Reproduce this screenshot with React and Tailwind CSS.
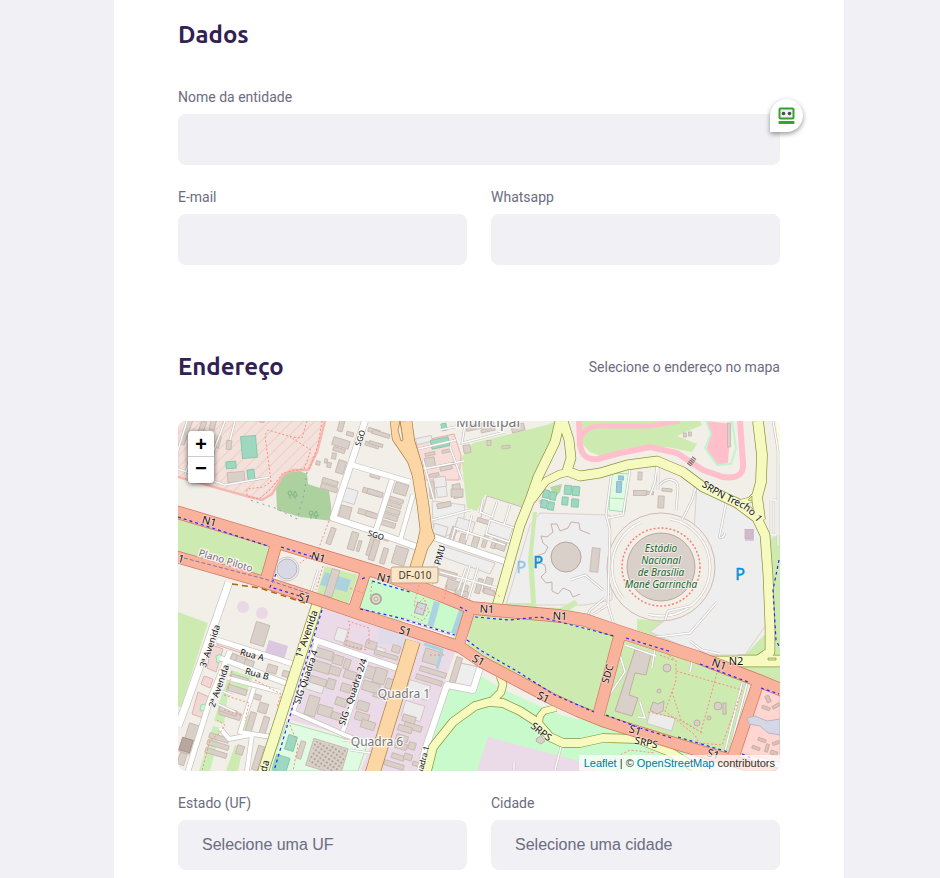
import React from "react";

const AREAS = [
  // residential and plain blocks
  { f: "#f3e2dc", s: "#f8c4bd", d: "M178 421H325L317 452L308 470L293 470L283 475L272 494L262 500L250 497L178 477Z" },
  { f: "#cdebb0", d: "M178 518L270 547L261 578L178 552Z" },
  { f: "#cdebb0", d: "M178 612L208 623L181 707H178Z" },
  { f: "#cdebb0", d: "M461 458L473 443L547 425L556 421L553 437L524 508L485 495L477 511L467 508Z" },
  { f: "#cdebb0", d: "M577 421H700L702 425L677 436L697 444L692 452L667 447L627 448L603 457L590 452L579 440Z" },
  { f: "#cdebb0", d: "M472 613L580 622L616 637L594 712L570 705L467 647Z" },
  { f: "#cdebb0", d: "M625 638L750 680L730 755L603 718Z" },
  { f: "#cdebb0", d: "M771 538L780 534V690L700 658L745 655L771 628Z" },
  { f: "#cdebb0", d: "M637 619L680 623L690 650L637 630Z" },
  { f: "#c8facc", d: "M366 577L467 610L458 642L400 624L356 608Z" },
  { f: "#c8facc", d: "M480 675L500 688L560 715L620 728L690 755V771H425L445 690Z" },
  { f: "#ebdbe8", d: "M488 737L575 760L600 771H477Z" },
  { f: "#ebdbe8", d: "M322 608L430 640L455 652L442 690L416 771H360L372 743L290 720Z" },
  { f: "#dffce2", s: "#b4dcb4", d: "M287 722L367 745L358 771H268Z" },
  { f: "#ffd6d1", s: "#e8b6ae", d: "M761 688L780 693V762L740 753Z" },
  { f: "#eeeeee", s: "#ddd0d0", d: "M697 482L757 515L766 545V625L745 655H704L650 632L690 600Z" },
  { f: "#eeeeee", s: "#ddd0d0", d: "M540 513L610 515L612 600L585 605H506L530 525Z" },
  { f: "#cdebb0", d: "M505 603L535 603L537 607L560 608L575 600L578 604L570 610L580 612L580 619L505 612Z" },
  { f: "#dddce8", d: "M379 625L402 636L412 646L378 643Z" },
  { f: "#add19e", d: "M285 472L300 471L307 474L308 484L329 491L331 505L332 521L300 517L277 510L276 487Z" },
  { f: "#dffce2", s: "#9fe3ae", d: "M611 473L629 474L625 512L609 510Z" },
  { f: "#f8dedb", s: "#f6a9a9", d: "M416 442L454 434L461 455L459 480L425 480Z" },
  { f: "#ffc0cb", d: "M707 421L731 424L728 463L717 465L706 450L711 435Z" },
  { f: "#cdebb0", d: "M533 512L537 512L533 552L536 603L531 603L528 560Z" },
  { f: "#b5d9a0", d: "M550 487L562 484L560 492L555 498Z" },
  { f: "#f2d8d5", s: "#dbb5b0", d: "M218 640L252 650L250 656L217 645Z" },
  { f: "#f2d8d5", s: "#dbb5b0", d: "M212 645L223 649L216 672L207 668Z" },
  { f: "#f2d8d5", s: "#dbb5b0", d: "M204 676L213 679L210 688L201 684Z" },
  { f: "#f2d8d5", s: "#dbb5b0", d: "M198 692L209 697L203 718L192 714Z" },
  { f: "#c8facc", s: "#9bdcb4", d: "M216 656L221 654L222 661L217 663ZM201 705L206 704L206 710L200 711Z" },
  { f: "#c9efb6", d: "M231 670L253 677L247 691L229 687L224 724L214 721L220 700Z" },
  { f: "#c9efb6", d: "M213 726L221 728L210 771H199Z" },
  { f: "#cdebb0", d: "M246 714L254 717L249 734L241 731Z" },
  { f: "#cdebb0", d: "M235 745L243 748L238 771H226Z" },
  { f: "#dbc7df", d: "M269 640L288 646L284 660L265 653Z" },
  { f: "#eeeeee", s: "#d8caca", d: "M432 501L434 540L463 530L465 505Z" },
  { f: "#eeeeee", s: "#d8caca", d: "M443 546L495 563L490 574L440 556Z" },
  { f: "#f2efe9", s: "#ccbbb8", d: "M487 496L522 507L514 533L480 520Z" },
  { f: "#eeeeee", s: "#ccbbb8", d: "M490 519L514 527L510 541L487 533Z" },
  { f: "#eeeeee", s: "#ccbbb8", d: "M460 663L480 667L472 688L454 684Z" },
  { f: "#cdebb0", d: "M325 566L358 575L347 608L315 599Z" },
  { f: "#aad3df", d: "M325 572L351 580L347 592L320 585Z" },
];

const WHITE = [
  [6, "M365 421L333 518L370 530L417 547"],
  [5, "M352 465L410 482"],
  [5, "M392 480L376 530"],
  [4, "M413 495L400 541"],
  [6, "M433 537L507 562"],
  [7, "M229 582L198 671L182 716L178 726"],
  [5, "M217 640L293 664"],
  [5, "M220 658L288 684"],
  [5, "M230 651L210 700L188 771"],
  [6, "M312 639L400 669"],
  [4, "M317 641L293 712L352 738L375 745"],
  [4, "M367 660L343 731"],
  [6, "M480 668L473 690L447 685L425 750L420 771"],
  [4, "M228 678L280 692"],
  [4, "M254 688L240 732L272 737"],
  [4, "M252 735L247 771"],
  [4, "M220 728L229 739L250 735"],
  [3, "M442 546L430 585"],
];

const YELLOW = [
  [9, "M560 421L555 442L538 477L530 500L520 525L503 585L497 606"],
  [9, "M563 421L569 440L571 458L567 471L580 476L600 473L627 465L657 461L683 472L703 487L737 503L757 518L765 535L768 575L770 627V652L757 661H708"],
  [7, "M570 472L560 474L546 481L532 500"],
  [10, "M758 421L762 455L761 482L757 497L760 520"],
  [5, "M758 492L750 500L738 503"],
  [11, "M738 661H784"],
  [10, "M317 605L262 775"],
  [8, "M426 775L433 747L453 722L475 706L489 702L503 703L520 711L537 722L550 737L563 743L580 743L603 738L637 739L670 752L700 771"],
  [7, "M500 676L503 684L501 692L491 702"],
  [6, "M556 708L544 711L540 716L539 724"],
];

const ORANGE = [
  [9, "M395 421L397 438L412 460L419 480"],
  [11, "M406 421L409 442L417 468L423 505L426 530L423 544L413 577"],
  [7, "M424 520L431 537L423 549"],
  [14, "M413 641L372 775"],
];

const RED = [
  [12, "M170 510L280 543L380 573L440 595L472 608L505 611L560 616L585 620L620 632L697 657L757 680L784 691"],
  [11, "M170 555L267 583L313 598L380 621L430 637L460 647L482 662L550 698L578 711L603 721L680 745L730 760L784 776"],
  [11, "M276 545L266 580"],
  [10, "M366 571L354 608"],
  [10, "M470 609L459 645"],
  [11, "M620 634L598 717"],
  [11, "M758 683L733 758"],
];

const SERVICE =
  "M178 469L225 485L270 477M225 421L212 455L208 480M185 475L196 440M187 421L178 450M235 421L230 440M418 470L464 461M418 449L456 440M440 430L465 425L462 443L505 432M450 447L462 480M423 460L434 500M432 520L470 510M450 545L455 528L505 545M472 515L466 540M490 520L514 528L509 542L486 534L490 520M483 499L480 512L492 517L497 502M510 505L504 525M440 572L497 588M466 568L458 590M478 567L468 600M612 470L606 515L610 530L608 605L614 625M630 470L623 515L608 518M657 465L655 482L650 495M658 462V490M660 485C666 477 678 478 678 488L676 511M697 484L692 500L682 520M727 498L720 534C718 539 723 539 725 533M608 605L588 617M618 632L648 638L690 633L717 602M690 641L702 650L720 654M665 620L668 611L690 606M570 580L585 575L603 590M586 620L590 610L605 598M773 421L778 450V545M772 500H776V535H771V500M400 618L455 635M402 621L453 637M742 683L725 751M747 683L729 754M655 648L652 668M692 662L690 672M625 645L656 656M640 702L645 718L638 717M620 655L625 672L614 688L608 697M320 605L310 595L318 570M470 565L460 600M514 763L514 770M561 747L555 770M232 695L219 690M235 712L218 704M342 740L380 745M350 750L377 754";

const FOOT =
  "M307 421L302 438L292 437L268 430L265 435L271 482L263 487L247 489V496L259 499L270 490L283 473L304 469L311 450L290 437M322 421L318 445L309 471M329 521L318 550L300 563M323 566L316 590M419 585L414 605L428 612M350 588L365 594M372 582L370 602M666 653L676 661V680L671 695L665 711L695 735L699 743L722 745L742 690L676 671M717 673L700 735M672 692L681 720L704 734M648 712L676 718L697 730M673 660L660 655M348 621L369 628V645M350 624L346 645L367 650M417 605L424 598L429 612L423 621L411 615M610 760L630 750L655 753M232 671L228 690M224 695L249 703L245 721M224 710L243 716M217 720L225 725L220 733L210 740L202 771M255 680L281 694L277 708M430 655L445 655M447 585L444 600M492 590L500 597M290 725L298 745L293 771";

const CYCLE =
  "M178 517L268 546M281 547L323 560M362 579L366 577M276 574L270 587L300 596M460 607L467 611M372 581L410 592M360 609L374 612L400 618L455 635M475 617L510 620L540 617L568 624L614 636M467 640L480 650L515 670L555 695L594 712M626 638L672 652M700 664L748 682M606 715L640 728L672 738M678 737L728 752M322 610L297 692L274 771M779 560L773 590L776 640L780 648M761 688L779 694M742 754L751 758";

// cx, cy, width, height, rotation
const BUILDINGS = [
  [186, 432, 5, 26, 20], [202, 428, 5, 14, 20], [213, 424, 5, 12, 15], [218, 442, 4, 12, 15], [229, 445, 5, 9, 5], [236, 477, 17, 10, -5],
  [341, 426, 5, 11, 15], [350, 434, 7, 4, 15], [341, 443, 17, 8, 17], [339, 450, 12, 4, 17], [374, 431, 12, 4, 17], [372, 445, 14, 4, 17],
  [318, 463, 4, 4, 10], [326, 461, 3, 4, 10], [329, 465, 4, 5, 10], [334, 456, 4, 6, 10], [341, 467, 8, 13, 17], [330, 482, 16, 5, 17], [329, 488, 17, 5, 17],
  [371, 492, 17, 5, 17], [366, 513, 16, 5, 17], [345, 513, 11, 14, 15], [331, 536, 5, 17, 20], [353, 541, 7, 18, 17], [359, 546, 3, 11, 17], [371, 546, 5, 20, 17], [375, 476, 10, 4, 17], [381, 434, 18, 4, 17], [376, 444, 14, 3, 17],
  [401, 489, 13, 11, 17], [396, 500, 15, 4, 17], [394, 505, 15, 4, 17], [392, 511, 16, 5, 17], [390, 517, 16, 5, 17], [388, 524, 15, 5, 17], [375, 493, 16, 5, 17], [372, 515, 13, 5, 17],
  [374, 550, 6, 21, 17], [384, 556, 5, 16, 17], [400, 556, 13, 18, 17], [384, 538, 10, 4, 17],
  [480, 426, 28, 5, -12], [488, 430, 14, 3, -12], [518, 428, 13, 7, -15], [467, 449, 7, 8, -10], [489, 443, 4, 5, 0], [506, 447, 8, 3, -8],
  [430, 454, 10, 3, -12], [447, 451, 10, 3, -12], [446, 468, 12, 4, -12], [434, 475, 10, 3, -12], [430, 463, 10, 11, -10],
  [457, 491, 8, 14, -10], [457, 493, 12, 8, 0], [432, 490, 5, 17, -5], [444, 505, 14, 5, -12], [483, 521, 12, 4, 17],
  [453, 534, 5, 15, 17], [463, 540, 7, 12, 17], [475, 543, 6, 13, 17], [485, 541, 4, 13, 17], [494, 543, 4, 11, 17], [501, 545, 10, 10, 20], [447, 574, 20, 6, 15],
  [455, 586, 18, 10, 17], [479, 586, 5, 15, 17], [488, 585, 7, 15, 17], [465, 590, 5, 10, 17],
  [640, 476, 4, 8, 2], [640, 493, 13, 5, 0], [650, 493, 7, 3, 5], [667, 490, 10, 3, 5], [661, 502, 6, 12, 3], [595, 560, 8, 24, 6],
  [729, 435, 3, 24, 0], [685, 435, 3, 4, 0], [690, 434, 3, 4, 0], [749, 534, 8, 9, 0],
  [260, 634, 14, 22, 17], [238, 659, 17, 7, 17], [249, 664, 9, 8, 17], [272, 669, 10, 8, 17], [286, 674, 7, 6, 17], [234, 657, 5, 6, 17],
  [239, 679, 18, 6, 17], [237, 690, 20, 6, 17], [230, 714, 22, 7, 17], [228, 711, 18, 5, 17], [219, 738, 20, 5, 17], [218, 745, 22, 5, 17], [216, 753, 22, 5, 17],
  [257, 697, 8, 5, 17], [263, 708, 9, 10, 17], [251, 722, 6, 20, 17], [264, 727, 6, 21, 17], [192, 732, 10, 16, 17], [186, 746, 11, 14, 17], [182, 759, 7, 12, 17], [258, 758, 6, 25, 17], [240, 750, 7, 9, 17],
  [324, 654, 18, 9, 17], [321, 667, 19, 10, 17], [318, 681, 17, 7, 17], [338, 660, 10, 9, 17], [335, 671, 11, 8, 17], [347, 664, 6, 10, 17], [350, 675, 12, 8, 17], [331, 684, 8, 10, 17], [346, 688, 10, 8, 17], [312, 706, 11, 20, 17], [325, 711, 14, 10, 17], [341, 702, 11, 8, 17], [336, 716, 9, 7, 17], [353, 645, 18, 5, 17], [371, 645, 11, 8, 17],
  [372, 673, 15, 12, 17], [371, 687, 17, 10, 17], [363, 706, 12, 9, 17], [362, 717, 14, 8, 17], [368, 725, 14, 8, 17], [386, 655, 24, 4, 17], [396, 649, 8, 7, 17], [380, 676, 12, 15, 17], [390, 684, 8, 10, 17],
  [432, 657, 17, 14, 17], [433, 672, 27, 5, 17], [429, 680, 27, 5, 17], [456, 670, 6, 26, 17], [409, 719, 13, 7, 17], [413, 727, 18, 6, 17], [405, 729, 14, 6, 17], [402, 738, 12, 6, 17], [401, 746, 12, 6, 17], [398, 757, 13, 5, 17], [394, 765, 20, 5, 17], [412, 746, 7, 7, 17], [408, 757, 8, 6, 17], [416, 764, 7, 4, 17],
  [301, 750, 5, 18, 17], [327, 757, 36, 28, 17], [379, 696, 12, 4, 17],
  [332, 583, 8, 28, 17], [262, 421, 4, 3, 0], [542, 502, 4, 3, 0], [462, 593, 14, 5, 17], [489, 592, 11, 5, 17],
];

const TENNIS = [
  [249, 447, 15, 22, -5], [231, 465, 10, 7, -5], [251, 475, 7, 11, -8], [440, 443, 18, 9, -12], [444, 427, 5, 7, -10],
  [546, 494, 6, 8, 10], [553, 496, 6, 8, 10], [544, 504, 6, 8, 10], [551, 506, 6, 8, 10],
  [568, 490, 7, 9, 5], [576, 491, 7, 9, 5], [565, 501, 6, 8, 5], [575, 503, 7, 8, 5], [291, 743, 9, 15, 17], [281, 764, 14, 16, 17],
];

const PALE = [
  [441, 487, 10, 20, -8], [440, 482, 12, 10, -8], [380, 652, 9, 9, 17], [418, 690, 22, 15, 17], [413, 711, 20, 16, 17], [315, 687, 17, 9, 17], [341, 635, 11, 13, 17], [350, 496, 13, 14, 17], [465, 525, 18, 11, 17], [440, 530, 14, 10, 17], [424, 440, 16, 6, -12], [617, 575, 8, 17, 10], [619, 550, 9, 15, 22], [661, 721, 26, 13, 17],
];

const LABELS = [
  ["N1", 209, 525, 11, 15], ["N1", 318, 561, 11, 15], ["N1", 384, 582, 11, 15], ["N1", 487, 613, 11, 3], ["N1", 560, 620, 11, 3], ["N1", 719, 668, 11, 18], ["N2", 736, 665, 11, 0],
  ["S1", 178, 562, 11, 15], ["S1", 304, 602, 11, 17], ["S1", 405, 635, 11, 17], ["S1", 478, 664, 11, 28], ["S1", 543, 701, 11, 25], ["S1", 635, 734, 11, 17], ["S1", 713, 758, 11, 17],
  ["SGO", 360, 441, 8, -72], ["SGO", 376, 538, 8, 17], ["PMU", 440, 558, 9, -75], ["SDC", 608, 677, 10, -73],
  ["Rua A", 252, 658, 9, 15], ["Rua B", 257, 677, 9, 15],
  ["3ª Avenida", 210, 649, 9, -71], ["2ª Avenida", 219, 689, 9, -71], ["1ª Avenida", 307, 637, 10, -71],
  ["SIG Quadra 4", 306, 680, 9, -71], ["SIG - Quadra 2/4", 353, 695, 9, -71], ["Quadra 1", 422, 766, 8, -75], ["da", 265, 769, 10, -75],
  ["SRPS", 541, 735, 10, 38], ["SRPS", 646, 746, 10, 12],
];

function Boxes({ items, fill, stroke }) {
  return items.map(([x, y, w, h, r], i) => (
    <rect key={i} x={x - w / 2} y={y - h / 2} width={w} height={h} fill={fill} stroke={stroke} strokeWidth="0.8" transform={`rotate(${r} ${x} ${y})`} />
  ));
}

function Roads({ items, fill, casing }) {
  return (
    <g fill="none" strokeLinejoin="round">
      {items.map(([w, d], i) => <path key={`c${i}`} d={d} stroke={casing} strokeWidth={w + 1.4} />)}
      {items.map(([w, d], i) => <path key={`f${i}`} d={d} stroke={fill} strokeWidth={w} />)}
    </g>
  );
}

function Tree({ x, y }) {
  return <path d={`M${x} ${y}v-4M${x - 2} ${y - 6}a2 2 0 1 0 4 0a2 2 0 1 0 -4 0M${x + 5} ${y}v-3M${x + 5} ${y - 8}l-2.500 5h5z`} fill="none" stroke="#7db488" strokeWidth="1" />;
}

function MapArt() {
  return (
    <svg className="block h-full w-full" viewBox="178 421 602 350" preserveAspectRatio="xMidYMid slice" role="img" aria-label="Mapa de Brasília" fontFamily="'Noto Sans', sans-serif">
      <defs>
        <pattern id="hatch" width="8" height="8" patternUnits="userSpaceOnUse" patternTransform="rotate(45)">
          <path d="M0 0V8" stroke="#efb5ae" strokeWidth="1" />
        </pattern>
        <pattern id="dots" width="4" height="4" patternUnits="userSpaceOnUse" patternTransform="rotate(17)">
          <rect width="2" height="2" fill="#b3a49b" />
        </pattern>
      </defs>
      <rect x="178" y="421" width="602" height="350" fill="#f2efe9" />
      {AREAS.map((a, i) => <path key={i} d={a.d} fill={a.f} stroke={a.s || "none"} strokeWidth="1" />)}
      <path d={AREAS[0].d} fill="url(#hatch)" />
      <path d="M178 477L250 497L262 500L272 494L283 475L293 470H308L317 452L325 421" fill="none" stroke="#f6b9b2" strokeWidth="2.500" />
      <path d="M773 421H780V535L771 538Z" fill="#f2efe9" />
      <path d="M776 421H780V470Z" fill="#fffde0" />

      <g fill="none" stroke="#ffc0cb" strokeWidth="6">
        <path d="M579 421L580 445C582 457 588 460 598 459L620 453L650 447L677 453L703 470L723 477C738 479 744 474 743 463L740 421" />
        <path d="M581 438C585 428 592 425 608 426L650 426L680 421" strokeWidth="5" />
      </g>
      <path d="M706 421L711 434L705 448L717 465L731 464L736 448L732 421" fill="none" stroke="#bff5cd" strokeWidth="2" />

      <Boxes items={PALE} fill="#ececec" stroke="#d2c2bf" />
      <Boxes items={BUILDINGS} fill="#d9d0c9" stroke="#c6b5ac" />
      <Boxes items={TENNIS} fill="#9fd8c1" stroke="#7fc2a6" />
      <Boxes items={[[186, 745, 11, 13, 17]]} fill="#b8a79d" stroke="#a39187" />
      <rect x="311" y="745" width="33" height="24" fill="url(#dots)" transform="rotate(17 327 757)" />
      <Boxes items={[[621, 478, 5, 4, 3], [619, 487, 5, 11, 3]]} fill="#9cc9dc" stroke="#83b3c8" />
      <path d="M611 498L625 499" stroke="#9fe3ae" />
      <path d="M434 601L440 603L433 628L427 626ZM459 610L464 611L456 635L451 633Z" fill="#aad3df" />
      <path d="M424 644L442 650L437 669" fill="none" stroke="#aad3df" strokeWidth="3" />
      <g fill="#c8a9d0" opacity="0.550"><rect x="745" y="529" width="9" height="12" /></g>
      <g fill="#ead8e7"><circle cx="243" cy="607" r="6" /><circle cx="262" cy="613" r="6" /></g>
      <g fill="#f2efe9" stroke="#c8b0aa">
        <path d="M551 524L557 524L560 531L568 528L571 522L579 523L580 530L590 534M551 524L553 532L547 537L541 536L543 543L548 547L545 553L539 555L538 562L545 565L546 572L541 577L546 583L552 582L552 591L558 594L563 588L570 591L573 597L580 594" fill="none" />
      </g>
      <circle cx="566" cy="557" r="15" fill="#d9d0c9" stroke="#b7a79e" />
      <circle cx="661" cy="567" r="54" fill="#f2efe9" stroke="#cdbbb6" />
      <circle cx="661" cy="567" r="49" fill="none" stroke="#d5cdc8" strokeWidth="3" strokeDasharray="90 30" />
      <circle cx="661" cy="567" r="49" fill="none" stroke="#fff" strokeWidth="1.500" strokeDasharray="90 30" />
      <circle cx="661" cy="567" r="39" fill="none" stroke="#fa8072" strokeWidth="1.500" strokeDasharray="2 2" />
      <circle cx="661" cy="567" r="34" fill="#d9d0c9" stroke="#bfa79c" />
      <circle cx="661" cy="567" r="11" fill="none" stroke="#c9bbb2" strokeWidth="0.700" />
      <circle cx="287" cy="569" r="10" fill="#d8d9e5" stroke="#b9b5c4" />
      <circle cx="287" cy="569" r="12" fill="none" stroke="#d0c7c7" />
      <circle cx="376" cy="599" r="5" fill="#e5ddd4" stroke="#b3a89e" strokeWidth="2" />
      <circle cx="376" cy="599" r="2" fill="#c8facc" stroke="#b3a89e" />
      <rect x="416" y="603" width="9" height="11" fill="#d5d6e1" stroke="#b6a9a9" transform="rotate(17 420 608)" />
      <g fill="#d9d0c9" stroke="#c1afa6">
        <path d="M635 650L651 654L646 675L635 673L629 695L638 698L632 716L615 711Z" />
        <path d="M653 702L658 704L664 701L663 711L657 714L650 710Z" />
        <circle cx="667" cy="668" r="4" /><circle cx="659" cy="691" r="2" /><circle cx="718" cy="706" r="4" /><circle cx="697" cy="723" r="3" /><circle cx="709" cy="718" r="2" />
        <rect x="723" y="703" width="3" height="11" />
        <path d="M537 738L541 736L545 741L541 744L536 741Z" />
      </g>
      <Boxes items={[[768, 699, 4, 7, -25], [766, 708, 8, 3, 20], [776, 706, 8, 3, -30], [762, 740, 8, 3, 20], [767, 748, 3, 8, 15], [756, 748, 8, 3, 20], [776, 743, 7, 3, -20], [774, 753, 7, 4, 20]]} fill="#d9c3bc" stroke="#c7aaa1" />

      <path d={SERVICE} fill="none" stroke="#c6bfbb" strokeWidth="2.600" />
      <path d={SERVICE} fill="none" stroke="#fff" strokeWidth="1.400" />
      <path d="M180 514L230 530M307 472L304 495L297 519L275 508L250 500" fill="none" stroke="#9797b9" strokeDasharray="2 4" strokeWidth="1" />
      <Tree x={290} y={499} /><Tree x={311} y={519} />

      <Roads items={WHITE} fill="#ffffff" casing="#c8c4c1" />
      <Roads items={YELLOW} fill="#f7fabf" casing="#8c943b" />
      <Roads items={ORANGE} fill="#fcd6a4" casing="#ad8042" />
      <Roads items={RED} fill="#f9b29c" casing="#d0775f" />
      <path d="M747 718L755 716L767 721L780 719V735L768 733L760 726L749 724Z" fill="#d5d6e6" stroke="#bcb5c5" />
      <path d="M400 421L403 440L401 441L398 430Z" fill="#f2efe9" stroke="#ad8042" strokeWidth="0.800" />
      <path d="M748 500L752 496L752 501ZM768 658h8v2h-8z" fill="#ddeec2" stroke="#8c943b" strokeWidth="0.700" />

      <g fill="none" strokeWidth="1">
        <path d={FOOT} stroke="#fa8d80" strokeDasharray="2 2" />
        <path d={CYCLE} stroke="#2929f0" strokeWidth="1.200" strokeDasharray="3 3" />
        <path d="M184 558L265 579L310 594" stroke="#8e70a8" strokeDasharray="4 2" />
        <path d="M232 584L260 588L308 604" stroke="#a6680c" strokeWidth="1.500" strokeDasharray="6 4" />
        <path d="M689 465L695 457" stroke="#666" strokeWidth="5" strokeDasharray="1 1" />
      </g>

      <g textAnchor="middle" fill="#111" stroke="#fff" strokeOpacity="0.550" strokeWidth="1.500" paintOrder="stroke">
        {LABELS.map(([t, x, y, s, r], i) => (
          <text key={i} x={x} y={y} fontSize={s} transform={`rotate(${r} ${x} ${y - 3})`}>{t}</text>
        ))}
        <path id="srpn" d="M701 486Q722 500 738 506Q752 513 761 528" fill="none" stroke="none" />
        <text fontSize="10" textAnchor="start"><textPath href="#srpn">SRPN Trecho 1</textPath></text>
      </g>
      <g textAnchor="middle" fill="#777" stroke="#fff" strokeOpacity="0.800" strokeWidth="2.500" paintOrder="stroke">
        <text x="488" y="427" fontSize="14">Municipal</text>
        <text x="404" y="698" fontSize="12">Quadra 1</text>
        <text x="377" y="746" fontSize="12">Quadra 6</text>
        <text x="226" y="564" fontSize="10" fill="#8a6288" transform="rotate(17 226 560)">Plano Piloto</text>
      </g>
      <g textAnchor="middle" fontSize="10" fontStyle="italic" fill="#19682c" stroke="#fff" strokeOpacity="0.600" strokeWidth="2" paintOrder="stroke">
        <text x="661" y="552">Estádio</text><text x="661" y="564">Nacional</text><text x="661" y="576">de Brasília</text><text x="661" y="588">Mané Garrincha</text>
      </g>
      <g textAnchor="middle" fontSize="16" fill="#0092da" stroke="#0092da" strokeWidth="0.500">
        <text x="521" y="573" opacity="0.400">P</text><text x="538" y="568">P</text><text x="740" y="580">P</text>
      </g>
      <rect x="391" y="567" width="47" height="16" rx="2" fill="#f7e5cc" stroke="#c5a373" />
      <text x="415" y="579" textAnchor="middle" fontSize="10" fill="#4f3b18">DF-010</text>
    </svg>
  );
}

function Field({ id, label, children }) {
  return (
    <div className="relative min-w-0 flex-1">
      <label htmlFor={id} className="mb-2 block text-sm leading-[18px]">{label}</label>
      {children}
    </div>
  );
}

const inputClass = "block h-[51px] w-full rounded-lg bg-[#f0f0f5] px-6 text-base text-[#6c6c80] outline-none";
const selectClass = "block h-[50px] w-full appearance-none rounded-lg bg-[#f0f0f5] px-6 font-['Liberation_Sans',Arial,sans-serif] text-base text-[#6c6c80] outline-none";
const titleClass = "font-[Ubuntu,'Open_Sans',sans-serif] text-2xl leading-8 font-bold text-[#322153]";
const zoomClass = "flex w-[26px] items-center justify-center bg-white font-['Liberation_Mono',monospace] text-[20px] leading-none font-bold text-black";

export default function App() {
  return (
    <div className="min-h-screen bg-[#f0f0f5] pr-24 pl-[114px] font-[Roboto,sans-serif] text-[#6c6c80]">
      <form className="min-h-screen bg-white px-16 pt-[19px] pb-2">
        <section>
          <h2 className={titleClass}>Dados</h2>
          <div className="mt-[37px]">
            <Field id="name" label="Nome da entidade">
              <input id="name" type="text" className={inputClass} />
              <button type="button" aria-label="Preencher" className="absolute top-[11px] -right-[23px] flex h-[33px] w-[33px] items-center justify-center rounded-full rounded-bl-none bg-white shadow-[0_2px_5px_rgba(0,0,0,0.4)]">
                <svg width="17" height="17" viewBox="0 0 17 17" fill="none">
                  <rect x="1.500" y="1.500" width="14" height="10" rx="1" fill="#eef0f2" stroke="#37a12f" strokeWidth="2" />
                  <circle cx="5.500" cy="6.500" r="1.800" fill="#4b4b4b" />
                  <circle cx="11.500" cy="6.500" r="1.800" fill="#4b4b4b" />
                  <rect x="0.500" y="14" width="16" height="3" rx="1" fill="#37a12f" />
                </svg>
              </button>
            </Field>
          </div>
          <div className="mt-[23px] flex gap-6">
            <Field id="email" label="E-mail"><input id="email" type="email" className={inputClass} /></Field>
            <Field id="whatsapp" label="Whatsapp"><input id="whatsapp" type="text" className={inputClass} /></Field>
          </div>
        </section>

        <section className="mt-[86px]">
          <div className="flex items-center justify-between">
            <h2 className={titleClass}>Endereço</h2>
            <span className="text-sm">Selecione o endereço no mapa</span>
          </div>
          <div className="relative mt-[38px] h-[350px] overflow-hidden rounded-lg">
            <MapArt />
            <div className="absolute top-2.5 left-2.5 overflow-hidden rounded shadow-[0_1px_5px_rgba(0,0,0,0.65)]">
              <button type="button" aria-label="Aproximar" className={`${zoomClass} h-[26px] border-b border-[#ccc] pt-1`}>+</button>
              <button type="button" aria-label="Afastar" className={`${zoomClass} h-[26px]`}>−</button>
            </div>
            <div className="absolute right-0 bottom-0 bg-white/70 px-[5px] font-['Liberation_Sans',Arial,sans-serif] text-[11px] leading-4 text-[#333]">
              <a href="#leaflet" className="text-[#0078a8]">Leaflet</a> | © <a href="#osm" className="text-[#0078a8]">OpenStreetMap</a> contributors
            </div>
          </div>
          <div className="mt-[23px] flex gap-6">
            <Field id="uf" label="Estado (UF)">
              <select id="uf" className={selectClass}><option>Selecione uma UF</option></select>
            </Field>
            <Field id="city" label="Cidade">
              <select id="city" className={selectClass}><option>Selecione uma cidade</option></select>
            </Field>
          </div>
        </section>
      </form>
    </div>
  );
}
